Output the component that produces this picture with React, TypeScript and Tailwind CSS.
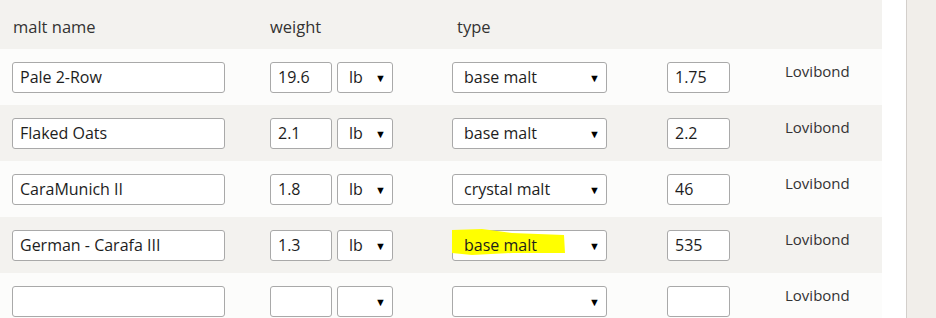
const rows = [
  { name: 'Pale 2-Row', weight: '19.6', unit: 'lb', type: 'base malt', lov: '1.75' },
  { name: 'Flaked Oats', weight: '2.1', unit: 'lb', type: 'base malt', lov: '2.2' },
  { name: 'CaraMunich II', weight: '1.8', unit: 'lb', type: 'crystal malt', lov: '46' },
  { name: 'German - Carafa III', weight: '1.3', unit: 'lb', type: 'base malt', lov: '535', marked: true },
  { name: '', weight: '', unit: '', type: '', lov: '' },
];

function FakeSelect({ value, width, marked }: { value: string; width: string; marked?: boolean }) {
  return (
    <div
      className={`relative h-[31px] ${width} rounded-[3px] border border-[#a9a9a9] bg-white pl-[11px] text-[16px] leading-[29px] text-[#1d1d1d]`}
    >
      {marked && (
        <svg className="absolute left-[-1px] top-[-6px]" width="116" height="32" viewBox="0 0 116 32">
          <path d="M0 5 L30 4 L60 8 L112 10 L113 28 L60 28 L20 30 L0 28 Z" fill="#ffff00" />
        </svg>
      )}
      <span className="relative">{value}</span>
      <span className="absolute right-[6px] top-0 text-[11px] leading-[29px] text-black">▼</span>
    </div>
  );
}

function Field({ value, width }: { value: string; width: string }) {
  return (
    <input
      readOnly
      value={value}
      className={`h-[31px] ${width} rounded-[3px] border border-[#a9a9a9] bg-white pl-[7px] text-[16px] text-[#1d1d1d] outline-none`}
    />
  );
}

export default function App() {
  return (
    <div className="flex h-[318px] w-[936px] overflow-hidden bg-white font-['Open_Sans',sans-serif]">
      <div className="w-[882px] shrink-0">
        <div className="flex h-[49px] items-center bg-[#f3f2ef] pt-[6px] text-[16.5px] text-[#333]">
          <span className="w-[270px] pl-[13px]">malt name</span>
          <span className="w-[187px]">weight</span>
          <span>type</span>
        </div>
        {rows.map((r, i) => (
          <div
            key={i}
            className={`flex h-[56px] items-center pl-[12px] ${i % 2 === 0 ? 'bg-[#fcfcfb]' : 'bg-[#f3f2ef]'}`}
          >
            <Field value={r.name} width="w-[213px]" />
            <div className="ml-[45px]">
              <Field value={r.weight} width="w-[62px]" />
            </div>
            <div className="ml-[5px]">
              <FakeSelect value={r.unit} width="w-[56px]" />
            </div>
            <div className="ml-[59px]">
              <FakeSelect value={r.type} width="w-[155px]" marked={r.marked} />
            </div>
            <div className="ml-[60px]">
              <Field value={r.lov} width="w-[63px]" />
            </div>
            <span className="ml-[55px] self-start pt-[11px] text-[15px] text-[#333]">Lovibond</span>
          </div>
        ))}
      </div>
      <div className="w-[24px] shrink-0 bg-white" />
      <div className="flex-1 border-l border-[#d3cfcb] bg-[#f1eeea]" />
    </div>
  );
}
